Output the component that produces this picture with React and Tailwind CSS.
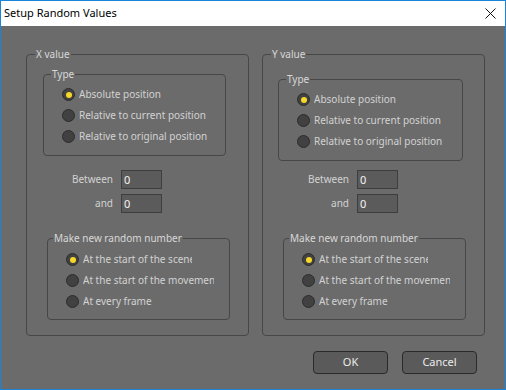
import React from "react";

function Radio({ checked }) {
  return (
    <span className="w-[13px] h-[13px] rounded-full border border-[#2c2c2c] bg-[#414141] flex items-center justify-center shrink-0">
      {checked && <span className="w-[6px] h-[6px] rounded-full bg-[#f6d82a]" />}
    </span>
  );
}

function RadioRow({ checked, label, w }) {
  return (
    <div className="flex items-center h-[21px] gap-[4px]">
      <Radio checked={checked} />
      <span className={`whitespace-nowrap overflow-hidden text-[#d2d2d2] ${w || ""}`}>{label}</span>
    </div>
  );
}

function Field({ label }) {
  return (
    <div className="flex items-center h-[19px]">
      <span className="w-[86px] text-right text-[#d2d2d2]">{label}</span>
      <div className="ml-[8px] w-[41px] h-[19px] border border-[#3e3e3e] bg-[#5b5b5b] text-[#f4f4f4] pl-[2px] leading-[17px] text-[11px]">0</div>
    </div>
  );
}

function Group({ title, typeClass }) {
  return (
    <fieldset className="w-[223px] h-[289px] border border-[#474747] rounded-[4px]">
      <legend className="ml-[8px] px-[1px] leading-[14px] text-[#d8d8d8]">{title}</legend>
      <fieldset className={`border border-[#474747] rounded-[4px] ${typeClass}`}>
        <legend className="ml-[7px] px-[1px] leading-[14px] text-[#d8d8d8]">Type</legend>
        <div className="pl-[18px] pt-[3px] pb-[8px]">
          <RadioRow checked label="Absolute position" />
          <RadioRow label="Relative to current position" />
          <RadioRow label="Relative to original position" />
        </div>
      </fieldset>
      <div className={`flex flex-col gap-[5px] ${title === "X value" ? "mt-[14px]" : "mt-[9px]"}`}>
        <Field label="Between" />
        <Field label="and" />
      </div>
      <fieldset className="mt-[18px] ml-[20px] w-[183px] border border-[#474747] rounded-[4px]">
        <legend className="ml-[5px] px-[1px] leading-[14px] text-[#d8d8d8]">Make new random number</legend>
        <div className="pl-[18px] pt-[4px] pb-[7px]">
          <RadioRow checked label="At the start of the scene" w="w-[109px]" />
          <RadioRow label="At the start of the movement" w="w-[131px]" />
          <RadioRow label="At every frame" />
        </div>
      </fieldset>
    </fieldset>
  );
}

function Button({ children }) {
  return (
    <button className="w-[75px] h-[23px] rounded-[4px] border border-[#2a2a2a] bg-[#5a5a5a] text-[#ececec] text-[11px]">
      {children}
    </button>
  );
}

export default function App() {
  return (
    <div className="w-[506px] h-[390px] border border-[#1a85d8] flex flex-col font-['Noto_Sans',sans-serif] text-[10px] overflow-hidden">
      <div className="h-[25px] bg-white flex items-center justify-between shrink-0">
        <span className="ml-[3px] text-[11px] text-black">Setup Random Values</span>
        <svg width="11" height="11" viewBox="0 0 11 11" className="mr-[9px]">
          <path d="M0.5 0.5 L10.5 10.5 M10.5 0.5 L0.5 10.5" stroke="#111" strokeWidth="1" />
        </svg>
      </div>
      <div className="flex-1 bg-[#6b6b6b] flex flex-col pl-[25px] pt-[21px]">
        <div className="flex gap-[13px]">
          <Group title="X value" typeClass="mt-[6px] ml-[16px] w-[183px]" />
          <Group title="Y value" typeClass="mt-[11px] ml-[15px] w-[185px]" />
        </div>
        <div className="flex justify-end gap-[14px] pr-[28px] mt-[15px]">
          <Button>OK</Button>
          <Button>Cancel</Button>
        </div>
      </div>
    </div>
  );
}
